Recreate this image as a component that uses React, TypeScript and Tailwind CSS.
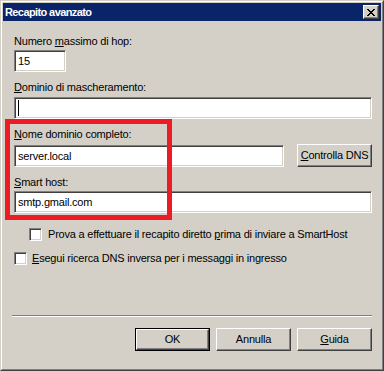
import React from "react";

const sunken =
  "border border-t-[#808080] border-l-[#808080] border-r-white border-b-white shadow-[inset_1px_1px_0_#404040,inset_-1px_-1px_0_#d4d0c8]";
const raised =
  "border border-t-white border-l-white border-r-[#404040] border-b-[#404040] shadow-[inset_-1px_-1px_0_#808080]";

function CloseGlyph() {
  const px = [
    [0, 0], [1, 0], [6, 0], [7, 0],
    [1, 1], [2, 1], [5, 1], [6, 1],
    [2, 2], [3, 2], [4, 2], [5, 2],
    [3, 3], [4, 3],
    [2, 4], [3, 4], [4, 4], [5, 4],
    [1, 5], [2, 5], [5, 5], [6, 5],
    [0, 6], [1, 6], [6, 6], [7, 6],
  ];
  return (
    <svg width="8" height="7" viewBox="0 0 8 7" shapeRendering="crispEdges">
      {px.map(([x, y]) => (
        <rect key={`${x}-${y}`} x={x} y={y} width="1" height="1" fill="#000" />
      ))}
    </svg>
  );
}

function Edit({ value, caret, className = "" }: { value?: string; caret?: boolean; className?: string }) {
  return (
    <div className={`h-[22px] bg-white flex items-center pl-[3px] ${sunken} ${className}`}>
      {caret && <div className="w-px h-[16px] bg-black" />}
      {value}
    </div>
  );
}

function Button({ children, def = false }: { children: React.ReactNode; def?: boolean }) {
  if (def) {
    return (
      <div className="w-[75px] h-[23px] border border-black">
        <div className={`h-full flex items-center justify-center ${raised}`}>{children}</div>
      </div>
    );
  }
  return <div className={`w-[75px] h-[23px] flex items-center justify-center ${raised}`}>{children}</div>;
}

function Check() {
  return <div className={`w-[13px] h-[13px] shrink-0 bg-white ${sunken}`} />;
}

export default function App() {
  return (
    <div className="relative w-[384px] h-[371px] bg-[#d4d0c8] text-[11px] leading-[13px] tracking-[-0.2px] text-black font-['Liberation_Sans',Arial,sans-serif] border border-t-[#d4d0c8] border-l-[#d4d0c8] border-r-[#404040] border-b-[#404040]">
      <div className="h-full flex flex-col p-px border border-t-white border-l-white border-r-[#808080] border-b-[#808080]">
        {/* Title bar */}
        <div className="h-[18px] shrink-0 bg-[#0a246a] flex items-center justify-between pl-[2px] pr-[2px]">
          <span className="text-white font-bold tracking-[-0.6px]">Recapito avanzato</span>
          <div className="w-[16px] h-[14px] bg-[#d4d0c8] flex items-center justify-center border border-t-white border-l-white border-r-[#404040] border-b-[#404040] shadow-[inset_-1px_-1px_0_#808080]">
            <CloseGlyph />
          </div>
        </div>

        {/* Body */}
        <div className="flex flex-col pl-[11px] pr-[9px]">
          <div className="mt-[14px]">
            Numero <span className="underline">m</span>assimo di hop:
          </div>
          <Edit value="15" className="w-[52px] mt-[2px]" />

          <div className="mt-[9px]">
            <span className="underline">D</span>ominio di mascheramento:
          </div>
          <Edit caret className="mt-[3px]" />

          <div className="mt-[9px]">
            <span className="underline">N</span>ome dominio completo:
          </div>
          <div className="mt-[3px] flex items-start justify-between">
            <Edit value="server.local" className="w-[270px] mt-px" />
            <Button>
              <span>
                <span className="underline">C</span>ontrolla DNS
              </span>
            </Button>
          </div>

          <div className="mt-[9px]">
            <span className="underline">S</span>mart host:
          </div>
          <Edit value="smtp.gmail.com" className="mt-[2px]" />

          <div className="mt-[15px] pl-[15px] flex items-center gap-[6px]">
            <Check />
            <span>
              Prova a effettuare il recapito diretto <span className="underline">p</span>rima di inviare a SmartHost
            </span>
          </div>
          <div className="mt-[11px] flex items-center gap-[5px]">
            <Check />
            <span>
              <span className="underline">E</span>segui ricerca DNS inversa per i messaggi in ingresso
            </span>
          </div>

          <div className="mt-[50px] -ml-[2px] h-[2px] border-t border-t-[#808080] border-b border-b-white" />

          <div className="mt-[11px] flex justify-end gap-[6px]">
            <Button def>OK</Button>
            <Button>Annulla</Button>
            <Button>
              <span>
                <span className="underline">G</span>uida
              </span>
            </Button>
          </div>
        </div>
      </div>

      {/* Red annotation rectangle */}
      <div className="absolute left-[4px] top-[118px] w-[167px] h-[101px] border-[5px] border-[#ed1c24] pointer-events-none" />
    </div>
  );
}
